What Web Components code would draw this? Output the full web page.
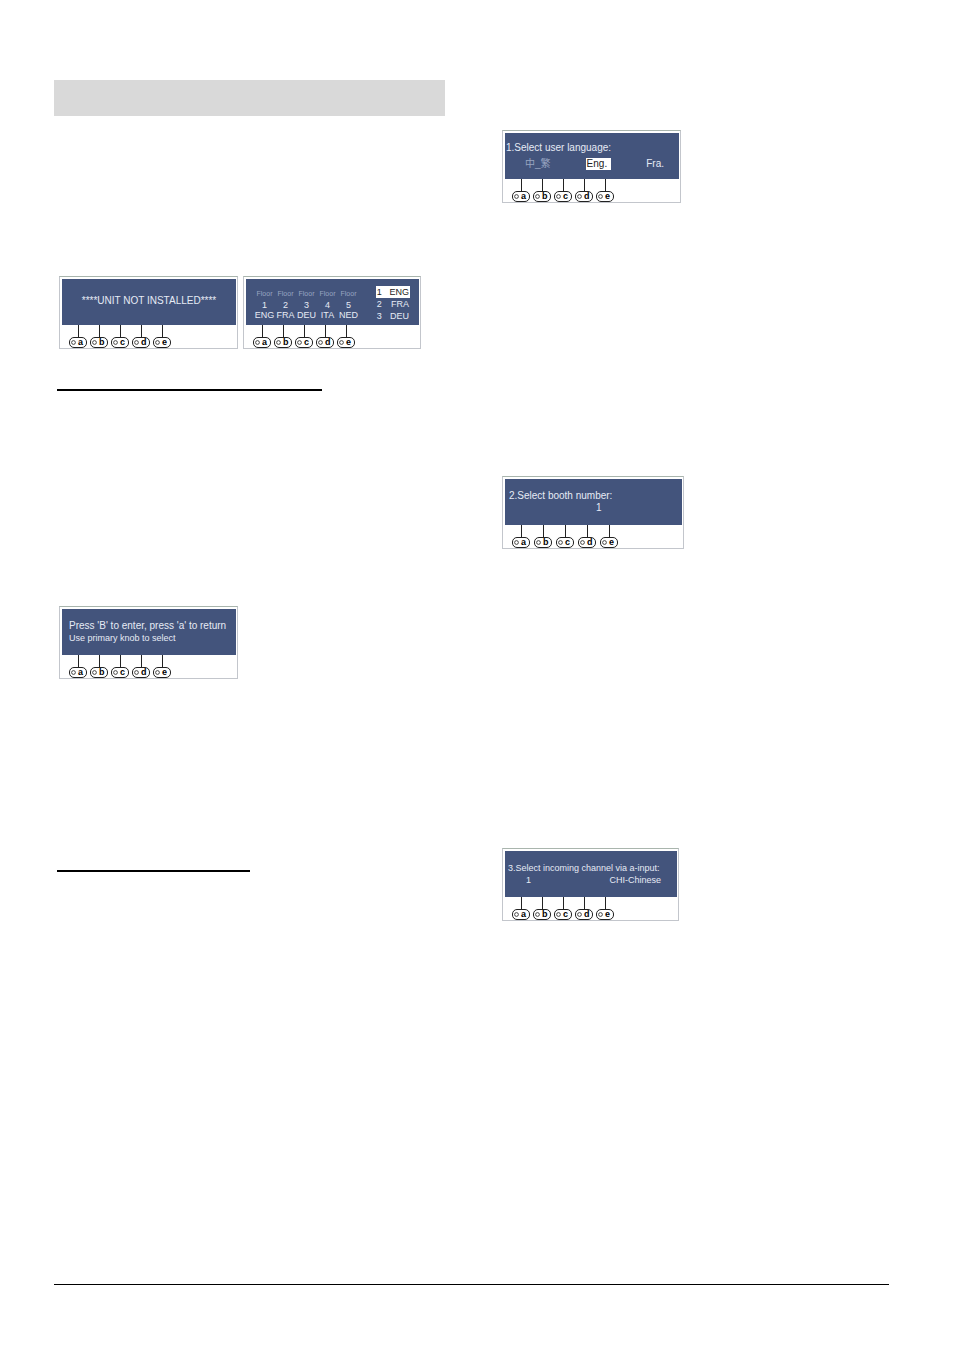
<!DOCTYPE html>
<html lang="en">
<head>
  <meta charset="utf-8" />
  <title>Unit installation</title>
  <meta name="viewport" content="width=device-width, initial-scale=1">

  <style>
    body {
      --screen-colour: #43547c;
      --lit: #e6ebf5;
      --dim: #98a5c1;
      --panel-width: 179px;
      margin: 0;
      background: #fff;
      color: #000;
      font-family: "Liberation Sans", Arial, sans-serif;
    }
    .wide { --panel-width: 182px; --key-gap: 4px; }
    .narrow { --panel-width: 177px; }
    .installed { margin-top: 160px; }
    .enter { margin-top: 215px; }
    .language { margin-top: 50px; }
    .booth { margin-top: 273px; }
    .channel { margin-top: 299px; }
    .large { font-size: 10px; }
  </style>
</head>
<body>
  <manual-page>
    <title-bar slot="left"></title-bar>
    <panel-row slot="left" class="installed">
      <lcd-panel><lcd-line align="center" class="single large">****UNIT NOT INSTALLED****</lcd-line></lcd-panel>
      <lcd-panel style="--panel-width: 178px"><channel-display></channel-display></lcd-panel>
    </panel-row>
    <section-rule slot="left" style="--rule-width: 265px; --space: 40px"></section-rule>
    <panel-row slot="left" class="enter">
      <lcd-panel>
        <lcd-line class="large" style="--indent: 7px">Press 'B' to enter, press 'a' to return</lcd-line>
        <lcd-line style="--indent: 7px">Use primary knob to select</lcd-line>
      </lcd-panel>
    </panel-row>
    <section-rule slot="left" style="--rule-width: 193px; --space: 191px"></section-rule>

    <lcd-panel slot="right" class="language">
      <language-select></language-select>
    </lcd-panel>
    <lcd-panel slot="right" class="booth wide">
      <lcd-line class="large" style="--indent: 4px">2.Select booth number:</lcd-line>
      <lcd-line class="large" style="--indent: 91px">1</lcd-line>
    </lcd-panel>
    <lcd-panel slot="right" class="channel narrow">
      <lcd-line style="--indent: 3px">3.Select incoming channel via a-input:</lcd-line>
      <lcd-line align="split"><span>1</span><span>CHI-Chinese</span></lcd-line>
    </lcd-panel>
  </manual-page>

  <script>
    const define = (name, html) => {
      customElements.define(name, class extends HTMLElement {
        constructor() {
          super();
          this.attachShadow({ mode: 'open' });
          this.shadowRoot.innerHTML = html;
        }
      });
    };

    define('manual-page', `
      <style>
        :host {
          display: flex;
          flex-direction: column;
          box-sizing: border-box;
          min-height: 100vh;
          padding: 80px 66px 65px 54px;
        }
        main {
          flex: 1;
          display: grid;
          grid-template-columns: 391fr 387fr;
          column-gap: 57px;
        }
        .column {
          display: flex;
          flex-direction: column;
          align-items: flex-start;
        }
        footer {
          border-top: 1px solid #000;
        }
      </style>
      <main>
        <div class="column"><slot name="left"></slot></div>
        <div class="column"><slot name="right"></slot></div>
      </main>
      <footer></footer>`);

    define('title-bar', `
      <style>
        :host {
          display: block;
          width: 100%;
          height: 36px;
          background: #d9d9d9;
        }
      </style>`);

    define('section-rule', `
      <style>
        :host {
          display: block;
          width: var(--rule-width);
          margin: var(--space) 0 0 3px;
          border-top: 2px solid #000;
        }
      </style>`);

    define('panel-row', `
      <style>
        :host {
          display: flex;
          gap: 5px;
          padding-left: 5px;
        }
      </style>
      <slot></slot>`);

    // one display with its five soft keys underneath
    define('lcd-panel', `
      <style>
        :host {
          display: block;
          box-sizing: border-box;
          width: var(--panel-width);
          padding: 2px 1px 0 2px;
          border: 1px solid #c3c6cc;
          border-top-color: #a9b5ad;
        }
        .screen {
          box-sizing: border-box;
          height: 46px;
          padding-top: 11px;
          background: var(--screen-colour);
          color: var(--lit);
          font-size: 9px;
          line-height: 12px;
        }
        .keys {
          display: flex;
          gap: var(--key-gap, 3px);
          padding-left: 7px;
        }
      </style>
      <div class="screen"><slot></slot></div>
      <div class="keys">
        <soft-key>a</soft-key>
        <soft-key>b</soft-key>
        <soft-key>c</soft-key>
        <soft-key>d</soft-key>
        <soft-key>e</soft-key>
      </div>`);

    define('soft-key', `
      <style>
        :host {
          display: flex;
          flex-direction: column;
          align-items: center;
        }
        :host::before {
          content: '';
          width: 1px;
          height: 12px;
          background: #222;
        }
        button {
          display: flex;
          align-items: center;
          gap: 2px;
          box-sizing: border-box;
          width: 18px;
          height: 11px;
          margin: 0;
          padding: 0 0 1px 1px;
          border: 1px solid #222;
          border-radius: 5px;
          background: #fff;
          color: #000;
          font: bold 9px/9px "Liberation Sans", Arial, sans-serif;
        }
        svg {
          flex: none;
        }
      </style>
      <button type="button">
        <svg width="5" height="5" viewBox="0 0 5 5"><circle cx="2.5" cy="2.5" r="1.9" fill="#fff" stroke="#222" stroke-width=".8"/></svg>
        <slot></slot>
      </button>`);

    define('lcd-line', `
      <style>
        :host {
          display: block;
          padding-left: var(--indent, 0);
          white-space: nowrap;
        }
        :host([align="center"]) {
          text-align: center;
        }
        :host(.single) {
          padding-top: 5px;
        }
        :host([align="split"]) {
          display: flex;
          justify-content: space-between;
          padding: 0 16px 0 21px;
        }
      </style>
      <slot></slot>`);

    define('language-select', `
      <style>
        :host {
          display: block;
          margin-top: -2px;
          font-size: 10px;
        }
        .options {
          display: flex;
          justify-content: space-between;
          align-items: center;
          padding: 4px 15px 0 20px;
        }
        .title {
          padding-left: 1px;
        }
        .chinese {
          color: var(--dim);
          font-family: "Liberation Sans", "Noto Sans CJK TC", sans-serif;
        }
        .selected {
          padding: 0 4px 0 1px;
          background: #fff;
          color: #222;
        }
      </style>
      <div class="title">1.Select user language:</div>
      <div class="options">
        <span class="chinese" lang="zh-Hant">中_繁</span>
        <span class="selected">Eng.</span>
        <span>Fra.</span>
      </div>`);

    define('channel-display', `
      <style>
        :host {
          display: flex;
          justify-content: space-between;
          align-items: flex-start;
          padding: 0 9px 0 8px;
          margin-top: -4px;
        }
        table {
          border-collapse: collapse;
        }
        td {
          padding: 0;
          text-align: center;
        }
        .floors {
          table-layout: fixed;
          width: 105px;
          margin-top: 2px;
          line-height: 10px;
        }
        .floors .dim td {
          color: var(--dim);
          font-size: 7px;
          line-height: 12px;
        }
        .list {
          width: 34px;
        }
        .list td:last-child {
          padding-right: 1px;
          text-align: right;
        }
        .selected {
          background: #fff;
          color: #222;
        }
      </style>
      <table class="floors">
        <tr class="dim"><td>Floor</td><td>Floor</td><td>Floor</td><td>Floor</td><td>Floor</td></tr>
        <tr><td>1</td><td>2</td><td>3</td><td>4</td><td>5</td></tr>
        <tr><td>ENG</td><td>FRA</td><td>DEU</td><td>ITA</td><td>NED</td></tr>
      </table>
      <table class="list">
        <tr class="selected"><td>1</td><td>ENG</td></tr>
        <tr><td>2</td><td>FRA</td></tr>
        <tr><td>3</td><td>DEU</td></tr>
      </table>`);
  </script>
</body>
</html>
